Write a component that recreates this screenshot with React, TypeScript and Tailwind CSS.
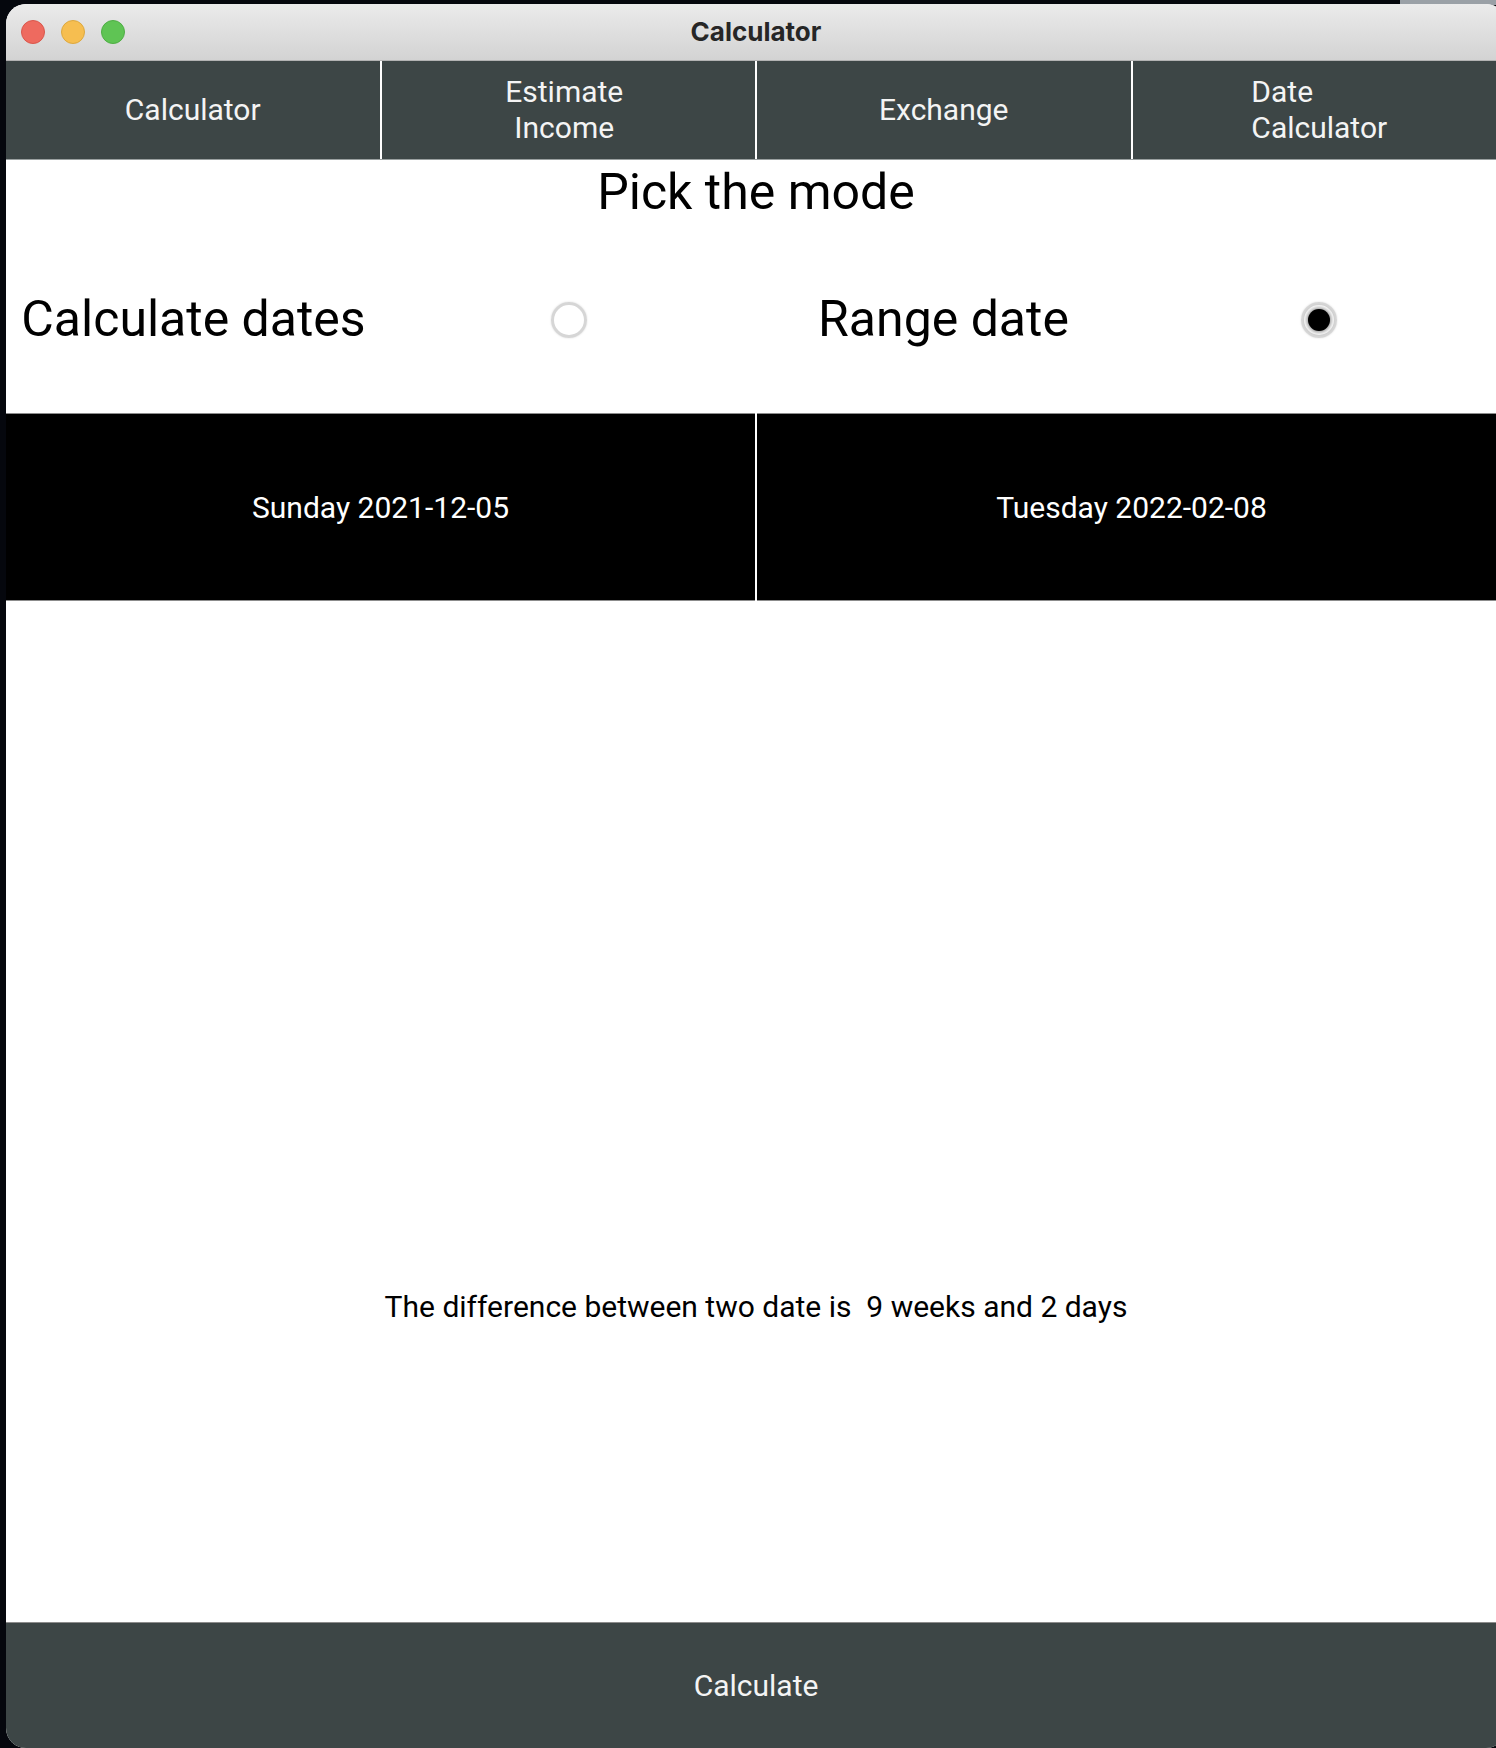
import React from "react";

const tabs = [
  { id: "calc", lines: ["Calculator"], align: "center", pad: "" },
  { id: "income", lines: ["Estimate", "Income"], align: "center", pad: "pr-[8px]" },
  { id: "exchange", lines: ["Exchange"], align: "center", pad: "" },
  { id: "date", lines: ["Date", "Calculator"], align: "left", pad: "" },
];

function Radio(props: { checked: boolean }) {
  return (
    <div className="flex h-[36px] w-[36px] items-center justify-center rounded-full border-[3px] border-[#d6d6d6] shadow-[0_0_2px_rgba(0,0,0,0.15)]">
      {props.checked ? (
        <div className="h-[22px] w-[22px] rounded-full bg-black shadow-[0_0_4px_1px_rgba(0,0,0,0.5)]" />
      ) : null}
    </div>
  );
}

export default function App() {
  return (
    <div className="relative h-[1748px] w-[1496px] overflow-hidden bg-[#05070d] font-['Roboto',sans-serif]">
      <div className="absolute right-0 top-0 h-[5px] w-[96px] bg-[#9aa0a6]" />
      <div className="relative ml-[6px] mt-[4px] flex h-[1744px] w-[1500px] flex-col overflow-hidden rounded-[20px] bg-white">
        {/* title bar */}
        <header className="relative flex h-[57px] shrink-0 items-center border-b border-[#b3b3b3] bg-gradient-to-b from-[#ebebeb] to-[#d3d3d3] pl-[15px]">
          <div className="flex items-center gap-[16px]">
            <span className="h-[24px] w-[24px] rounded-full border border-[#d9574c] bg-[#ee6a5f]" />
            <span className="h-[24px] w-[24px] rounded-full border border-[#dca83f] bg-[#f6be50]" />
            <span className="h-[24px] w-[24px] rounded-full border border-[#4fae45] bg-[#5fc454]" />
          </div>
          <div className="absolute inset-0 flex items-center justify-center pb-[2px] font-['Inter',sans-serif] text-[26px] font-bold text-[#262626]">
            Calculator
          </div>
        </header>

        {/* tabs */}
        <nav className="flex h-[99px] shrink-0 border-b border-[#9aa0a0] bg-white">
          {tabs.map((t, i) => (
            <div
              key={t.id}
              className={
                "flex h-full w-[374px] items-center justify-center bg-[#3d4646] text-[30px] leading-[36px] text-[#f4f4f4] " +
                (i > 0 ? "ml-[2px] " : "") +
                t.pad
              }
            >
              <div className={t.align === "left" ? "text-left" : "text-center"}>
                {t.lines.map((l) => (
                  <div key={l}>{l}</div>
                ))}
              </div>
            </div>
          ))}
        </nav>

        {/* mode picker */}
        <div className="flex h-[68px] shrink-0 items-center justify-center pb-[4px] text-[50px] text-black">
          Pick the mode
        </div>
        <div className="grid h-[185px] shrink-0 grid-cols-4 items-center pb-[2px] text-[50px] text-black">
          <div className="text-center">Calculate dates</div>
          <div className="flex justify-center">
            <Radio checked={false} />
          </div>
          <div className="text-center">Range date</div>
          <div className="flex justify-center">
            <Radio checked={true} />
          </div>
        </div>

        {/* dates */}
        <div className="flex h-[188px] shrink-0 gap-[2px]">
          <div className="flex flex-1 items-center justify-center border-y border-[#8c8c8c] bg-black text-[30px] text-white">
            Sunday 2021-12-05
          </div>
          <div className="flex flex-1 items-center justify-center border-y border-[#8c8c8c] bg-black text-[30px] text-white">
            Tuesday 2022-02-08
          </div>
        </div>

        {/* result */}
        <div className="flex min-h-0 flex-1 flex-col items-center pt-[683px] text-[30px] text-black">
          <p className="whitespace-pre">The difference between two date is  9 weeks and 2 days</p>
        </div>

        {/* calculate */}
        <button
          type="button"
          className="flex h-[126px] shrink-0 items-center justify-center border-t border-[#8c8c8c] bg-[#3d4646] text-[30px] text-[#f4f4f4]"
        >
          Calculate
        </button>
      </div>
    </div>
  );
}
